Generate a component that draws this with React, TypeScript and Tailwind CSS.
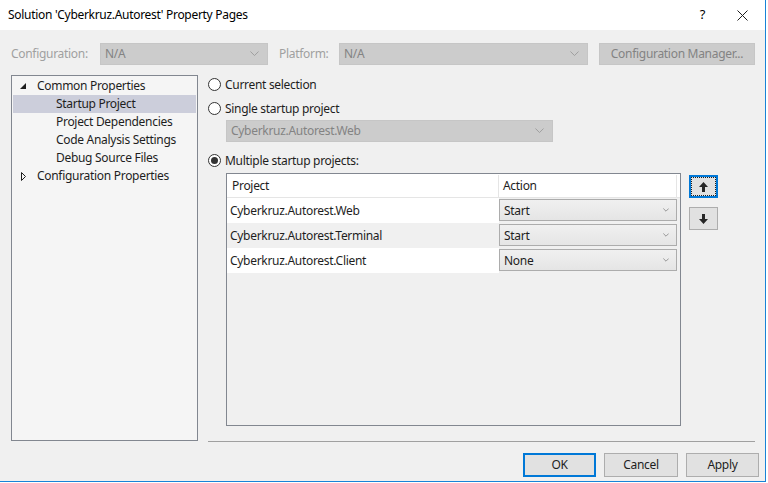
import React from 'react';

const font = { fontFamily: '"Noto Sans", "Segoe UI", sans-serif', letterSpacing: '-0.3px' };

function Chevron({ className = 'stroke-[#9a9a9a]', size = 9 }: { className?: string; size?: number }) {
  return (
    <svg width={size} height={size / 2 + 1} viewBox="0 0 10 6" className={className} fill="none" strokeWidth="1">
      <path d="M0.5 0.5 L5 5 L9.5 0.5" />
    </svg>
  );
}

function Radio({ checked, label }: { checked?: boolean; label: string }) {
  return (
    <div className="flex h-[16px] items-center gap-[4px] text-[12px] text-[#1e1e1e]">
      <span className="flex h-[13px] w-[13px] items-center justify-center rounded-full border border-[#333] bg-white">
        {checked && <span className="h-[7px] w-[7px] rounded-full bg-[#333]" />}
      </span>
      <span className="pt-[1px]">{label}</span>
    </div>
  );
}

function DisabledSelect({ value, width }: { value: string; width: string }) {
  return (
    <div className={`flex h-[22px] items-center justify-between border border-[#c6c6c6] bg-[#cccccc] pl-[4px] pr-[8px] text-[12px] text-[#838383] ${width}`}>
      <span>{value}</span>
      <Chevron />
    </div>
  );
}

function ActionSelect({ value }: { value: string }) {
  return (
    <div className="flex h-[22px] w-[178px] items-center justify-between border border-[#acacac] bg-gradient-to-b from-[#f0f0f0] to-[#e5e5e5] pl-[4px] pr-[7px] text-[12px] text-[#1e1e1e]">
      <span className="pt-[1px]">{value}</span>
      <Chevron className="stroke-[#606060]" size={6} />
    </div>
  );
}

function TreeRow({ label, depth, selected, arrow }: { label: string; depth: number; selected?: boolean; arrow?: 'open' | 'closed' }) {
  return (
    <div className={`flex h-[18px] items-center ${selected ? 'bg-[#cccedb]' : ''}`}>
      <span className="flex w-[24px] shrink-0 justify-end pr-[11px]">
        {arrow === 'open' && (
          <svg width="6" height="6" viewBox="0 0 6 6">
            <path d="M6 0 L6 6 L0 6 Z" fill="#1e1e1e" />
          </svg>
        )}
        {arrow === 'closed' && (
          <svg width="5" height="9" viewBox="0 0 5 9">
            <path d="M0.5 0.5 L4.5 4.5 L0.5 8.5 Z" fill="none" stroke="#1e1e1e" strokeWidth="1" />
          </svg>
        )}
      </span>
      <span className={depth === 1 ? 'pl-[19px]' : ''}>{label}</span>
    </div>
  );
}

const rows = [
  { project: 'Cyberkruz.Autorest.Web', action: 'Start' },
  { project: 'Cyberkruz.Autorest.Terminal', action: 'Start' },
  { project: 'Cyberkruz.Autorest.Client', action: 'None' },
];

function ArrowIcon({ down }: { down?: boolean }) {
  return (
    <svg width="9" height="10" viewBox="0 0 9 10" className={down ? 'rotate-180' : ''}>
      <path d="M4.5 0 L9 5 L6 5 L6 10 L3 10 L3 5 L0 5 Z" fill="#262626" />
    </svg>
  );
}

export default function App() {
  return (
    <div className="h-[483px] w-[768px] overflow-hidden bg-white" style={font}>
      <div className="flex h-[482px] w-[766px] flex-col border-b border-r border-[#1883d7] bg-[#f0f0f0]">
        {/* Title bar */}
        <div className="flex h-[30px] shrink-0 items-center justify-between bg-white pl-[8px] pr-[17px] text-[12px] text-black">
          <span>Solution 'Cyberkruz.Autorest' Property Pages</span>
          <div className="flex items-center gap-[32px]">
            <span className="text-[13px]">?</span>
            <svg width="11" height="11" viewBox="0 0 11 11" stroke="#1e1e1e" strokeWidth="1">
              <path d="M0.5 0.5 L10.5 10.5 M10.5 0.5 L0.5 10.5" />
            </svg>
          </div>
        </div>

        {/* Configuration row */}
        <div className="mt-[13px] flex h-[22px] items-center text-[12px]">
          <span className="ml-[11px] w-[89px] text-[#a0a0a0]">Configuration:</span>
          <DisabledSelect value="N/A" width="w-[168px]" />
          <span className="ml-[11px] w-[60px] text-[#a0a0a0]">Platform:</span>
          <DisabledSelect value="N/A" width="w-[249px]" />
          <div className="ml-[11px] flex h-[22px] w-[156px] items-center justify-center border border-[#c6c6c6] bg-[#cccccc] text-[#838383]">
            Configuration Manager...
          </div>
        </div>

        {/* Body */}
        <div className="mt-[10px] flex">
          <div className="ml-[11px] h-[366px] w-[187px] border border-[#828790] bg-[#f5f5f5] pt-[1px] pl-[1px] pr-[1px] text-[12px] text-[#1e1e1e]">
            <TreeRow label="Common Properties" depth={0} arrow="open" />
            <TreeRow label="Startup Project" depth={1} selected />
            <TreeRow label="Project Dependencies" depth={1} />
            <TreeRow label="Code Analysis Settings" depth={1} />
            <TreeRow label="Debug Source Files" depth={1} />
            <TreeRow label="Configuration Properties" depth={0} arrow="closed" />
          </div>

          <div className="ml-[10px] flex w-[548px] flex-col">
            <div className="mt-[1px]">
              <Radio label="Current selection" />
            </div>
            <div className="mt-[8px]">
              <Radio label="Single startup project" />
            </div>
            <div className="ml-[18px] mt-[4px]">
              <DisabledSelect value="Cyberkruz.Autorest.Web" width="w-[327px]" />
            </div>
            <div className="mt-[10px]">
              <Radio checked label="Multiple startup projects:" />
            </div>

            <div className="ml-[18px] mt-[5px] flex items-start gap-[8px]">
              <div className="h-[253px] w-[455px] border border-[#828790] bg-[#f0f0f0] text-[12px] text-[#1e1e1e]">
                <div className="flex h-[24px] border-b border-[#e5e5e5] bg-white pt-[1px]">
                  <div className="flex w-[272px] items-center border-r border-[#e5e5e5] pl-[5px]">Project</div>
                  <div className="flex w-[178px] items-center border-r border-[#e5e5e5] pl-[4px]">Action</div>
                </div>
                {rows.map((r, i) => (
                  <div key={r.project} className="flex h-[25px]">
                    <div className={`flex w-[272px] items-center pl-[3px] pt-[1px] ${i % 2 === 1 ? 'bg-[#f0f0f0]' : 'bg-white'}`}>{r.project}</div>
                    <div className="flex items-start pt-[1px]">
                      <ActionSelect value={r.action} />
                    </div>
                  </div>
                ))}
              </div>
              <div className="mt-[2px] flex flex-col gap-[9px]">
                <div className="flex h-[23px] w-[29px] items-center justify-center border-2 border-[#0078d7] bg-[#e1e1e1]">
                  <div className="flex h-[17px] w-[23px] items-center justify-center outline-1 outline-dotted outline-[#1e1e1e]">
                    <ArrowIcon />
                  </div>
                </div>
                <div className="flex h-[23px] w-[29px] items-center justify-center border border-[#adadad] bg-[#e1e1e1]">
                  <ArrowIcon down />
                </div>
              </div>
            </div>

            <div className="mt-[15px] h-px w-[547px] bg-[#a0a0a0]" />
          </div>
        </div>

        {/* Buttons */}
        <div className="mt-[11px] flex justify-end gap-[8px] pr-[6px] text-[12px] text-[#1e1e1e]">
          <div className="flex h-[24px] w-[73px] items-center justify-center border-2 border-[#0078d7] bg-[#e1e1e1]">OK</div>
          <div className="flex h-[24px] w-[74px] items-center justify-center border border-[#adadad] bg-[#e1e1e1]">Cancel</div>
          <div className="flex h-[24px] w-[73px] items-center justify-center border border-[#adadad] bg-[#e1e1e1]">Apply</div>
        </div>
      </div>
    </div>
  );
}
